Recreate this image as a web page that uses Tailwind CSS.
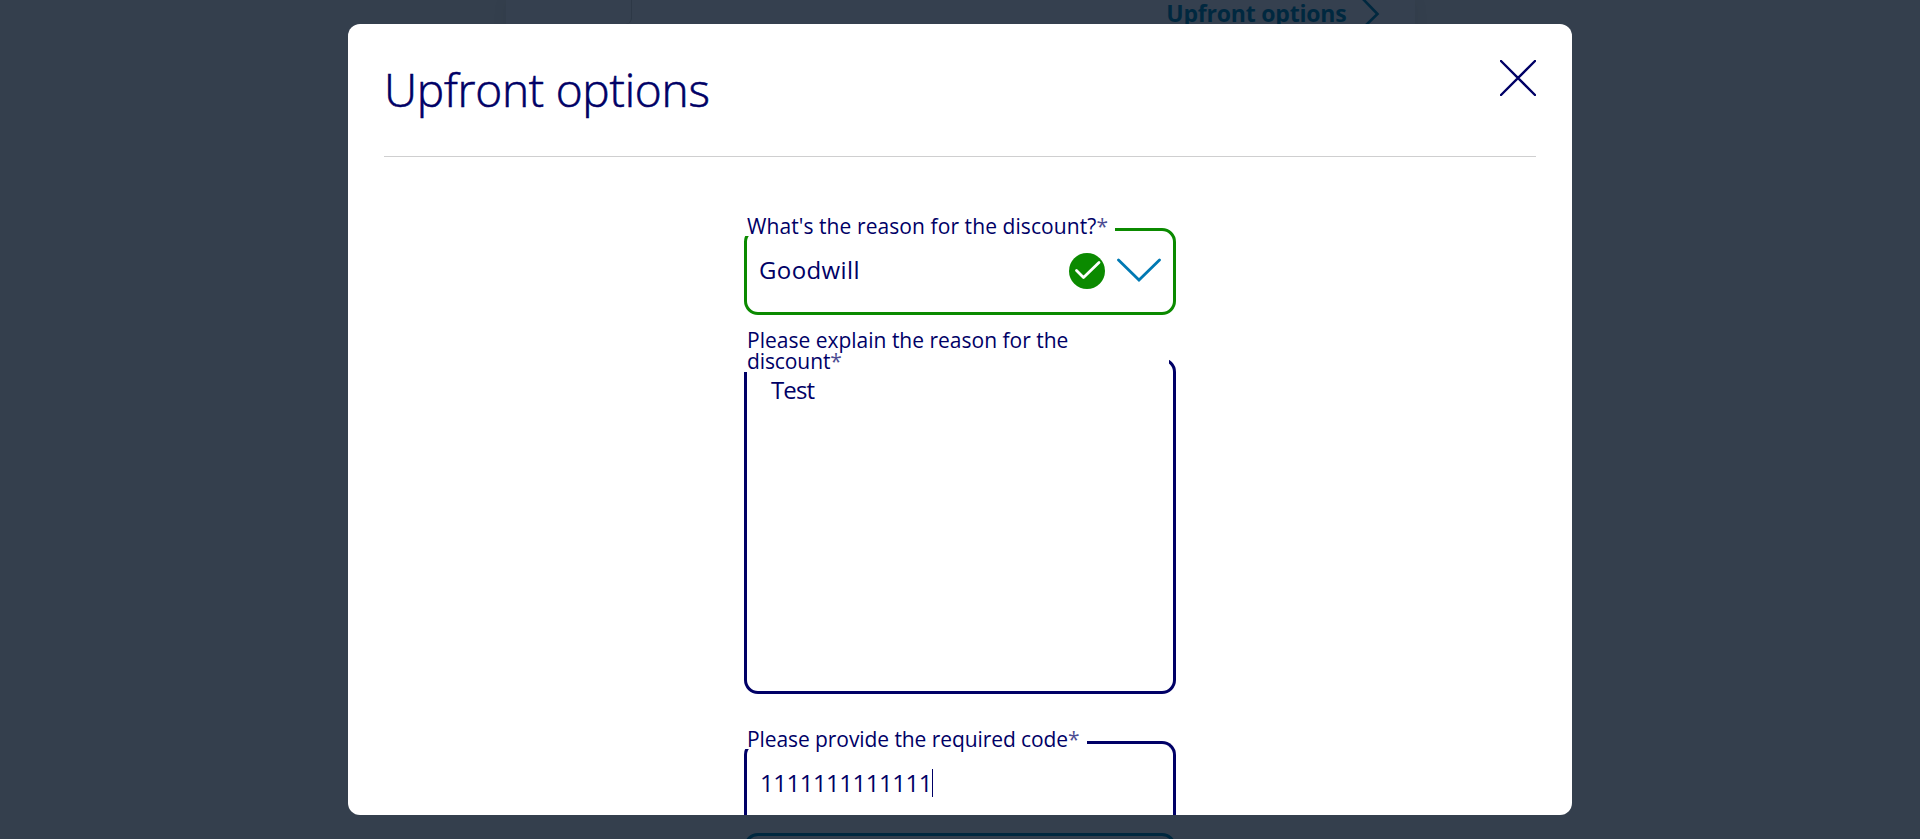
<!DOCTYPE html>
<html lang="en">
<head>
<meta charset="utf-8">
<title>Upfront options</title>
<script src="https://cdn.jsdelivr.net/npm/@tailwindcss/browser@4"></script>
</head>
<body class="relative h-[839px] overflow-hidden bg-[#343f4d] font-['Open_Sans','Noto_Sans',sans-serif] text-[#000066]">
  <!-- dimmed page behind the dialog -->
  <div class="absolute inset-0 flex justify-center">
    <div class="flex h-10 w-[909px] justify-end bg-[#35404f] pr-[35px] shadow-[0_0_16px_rgba(0,0,0,0.06)]">
      <div class="flex grow"><div class="h-6 w-[126px] rounded-br-md border-r border-[#2d3846]"></div></div>
      <div class="flex items-start text-[#00283f]">
        <span class="-mt-[3px] text-[23px] leading-[32px] font-bold tracking-[-0.2px] whitespace-nowrap">Upfront options</span>
        <svg class="ml-[15px] h-7 w-[18px]" viewBox="0 0 18 28" fill="none" stroke="currentColor" stroke-width="2.6"><path d="M0-2 15.500 14 1 28"/></svg>
      </div>
    </div>
  </div>
  <div class="absolute top-[833px] left-[744px] h-[6px] w-[432px] overflow-hidden">
    <div class="h-20 rounded-[14px] border-[3px] border-[#00283f]"></div>
  </div>

  <main class="absolute top-6 left-[348px] h-[791px] w-[1224px] overflow-hidden rounded-[12px] bg-white px-9">
    <header class="flex h-[133px] items-start justify-between border-b border-[#cfcfd0] pt-9">
      <h1 class="-mt-[3px] text-[46px] leading-[64px] font-light tracking-[-0.25px] whitespace-nowrap [-webkit-text-stroke:0.6px_#000066]">Upfront options</h1>
      <svg class="h-9 w-9" viewBox="0 0 36 36" fill="none" stroke="currentColor" stroke-width="2.4" stroke-linecap="round"><path d="M1 1 35 35M35 1 1 35"/></svg>
    </header>

    <form class="mx-auto flex w-[432px] flex-col pt-[71px]">
      <div class="relative flex h-[87px] items-start rounded-[14px] border-[3px] border-[#0b8a00] pt-[23px] pl-[12px]">
        <label class="absolute -top-[15px] -left-[3px] h-[20px] w-[371px] bg-white pl-[3px] text-[21px] leading-[21px] tracking-[0.08px] whitespace-nowrap">What's the reason for the discount?<span class="opacity-70">*</span></label>
        <span class="text-[24px] leading-[32px] tracking-[0.4px]">Goodwill</span>
        <svg class="absolute top-[22px] left-[322px] h-9 w-9" viewBox="0 0 36 36" fill="none"><circle cx="18" cy="18" r="18" fill="#0b8a00"/><path d="M7.500 17.500 14.500 24.500 30 9.500" stroke="#fff" stroke-width="2.800" stroke-linecap="round" stroke-linejoin="round"/></svg>
        <svg class="absolute top-[27px] left-[370px] h-6 w-11" viewBox="0 0 44 24" fill="none" stroke="#0079b3" stroke-width="2.800" stroke-linecap="round"><path d="M1.500 2 22 22 42.500 2"/></svg>
      </div>

      <div class="relative mt-[43px] h-[336px] rounded-[14px] border-[3px] border-[#000066] pt-[13px] pl-[24px]">
        <label class="absolute -top-[31px] -left-[3px] h-[42px] w-[425px] bg-white pr-20 pl-[3px] text-[21px] leading-[21px]">Please explain the reason for the<br><span class="tracking-[-0.1px]">discount<span class="opacity-70">*</span></span></label>
        <span class="text-[24px] leading-[32px] tracking-[-0.9px]">Test</span>
      </div>

      <div class="relative mt-[47px] flex h-[74px] items-start rounded-t-[14px] border-[3px] border-b-0 border-[#000066] pt-[23px] pl-[13px]">
        <label class="absolute -top-[15px] -left-[3px] h-[20px] w-[343px] bg-white pl-[3px] text-[21px] leading-[21px] tracking-[-0.08px] whitespace-nowrap">Please provide the required code<span class="opacity-70">*</span></label>
        <span class="text-[24px] leading-[32px] tracking-[-0.5px]">1111111111111</span>
        <span class="mt-[2px] h-7 w-px shrink-0 bg-[#000066]"></span>
      </div>
    </form>
  </main>
</body>
</html>
